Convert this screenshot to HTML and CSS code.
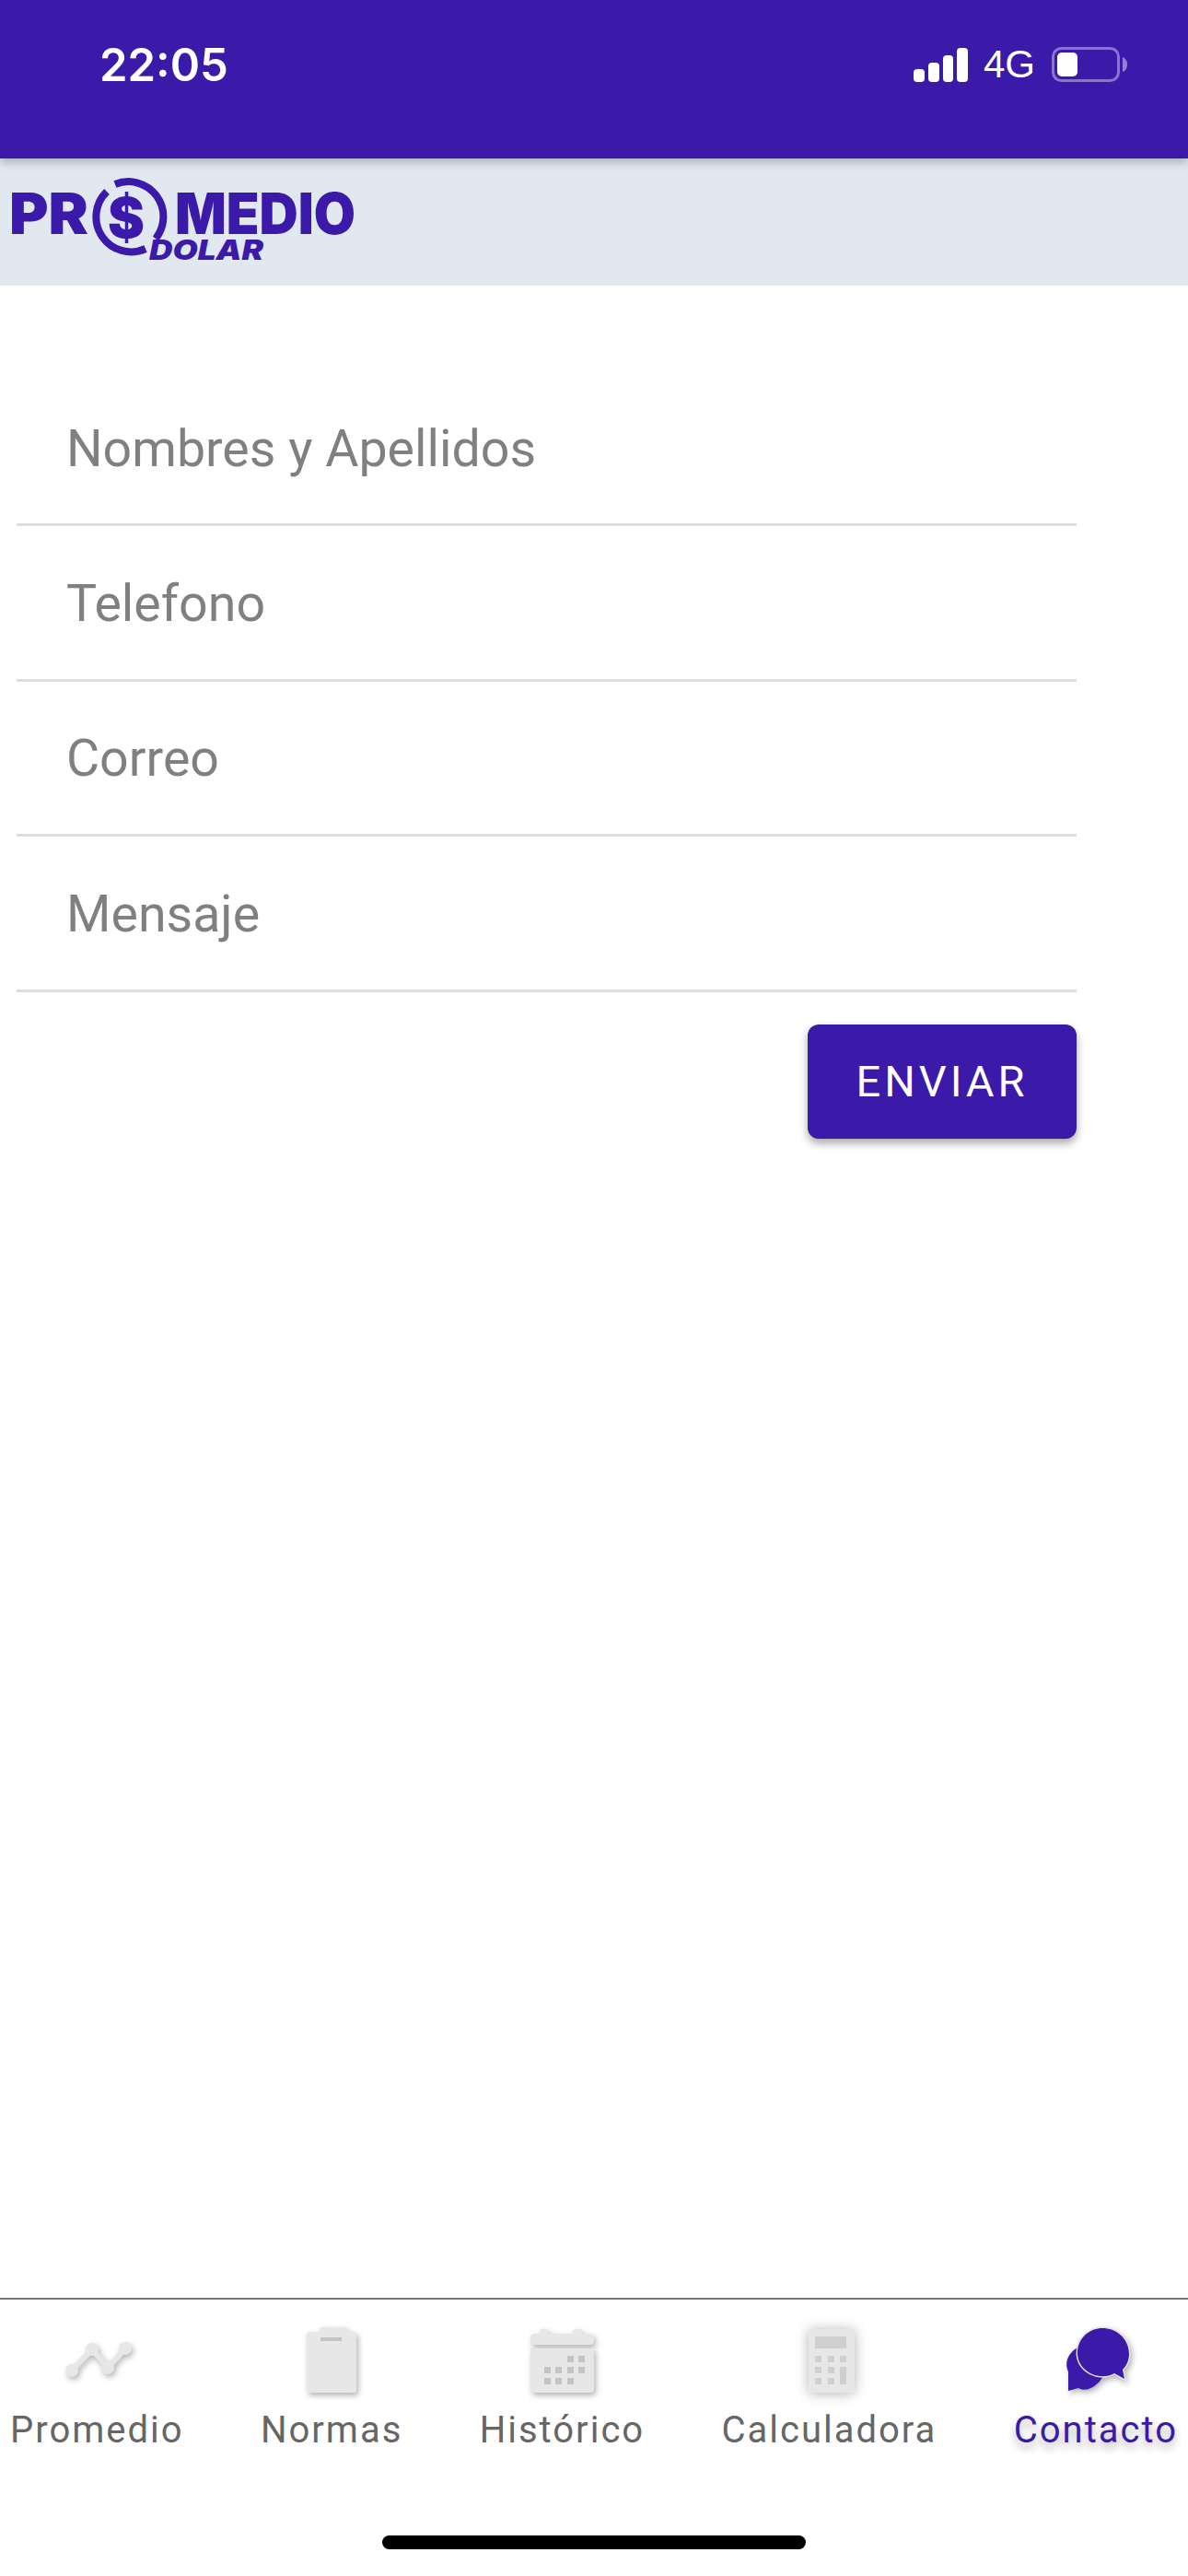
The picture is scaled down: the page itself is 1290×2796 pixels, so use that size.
FILE: index.html
```html
<!DOCTYPE html>
<html lang="es">
<head>
    <meta charset="UTF-8">
    <meta name="viewport" content="width=device-width, initial-scale=1.0">
    <title>Promedio Dolar</title>
    <link rel="stylesheet" href="styles.css">
</head>
<body>
    <div class="status-bar">
        <span class="status-time">22:05</span>
        <div class="status-right">
            <svg class="signal" width="59" height="37" viewBox="0 0 59 37">
                <rect x="0" y="23" width="12" height="14" rx="4"/>
                <rect x="16" y="16" width="12" height="21" rx="4"/>
                <rect x="32" y="8" width="11" height="29" rx="4"/>
                <rect x="47" y="0" width="12" height="37" rx="4"/>
            </svg>
            <span class="status-net">4G</span>
            <svg class="battery" width="82" height="38" viewBox="0 0 82 38">
                <rect class="battery-case" x="1.5" y="1.5" width="71" height="35" rx="9"/>
                <rect class="battery-level" x="6" y="6" width="22" height="26" rx="5"/>
                <path class="battery-cap" d="M77 11c3 1 5 4 5 8s-2 7-5 8z"/>
            </svg>
        </div>
    </div>

    <header class="app-header">
        <!-- logo: letters are real text, only the ring is drawn -->
        <svg class="logo" width="400" height="138" viewBox="0 172 400 138">
            <g class="logo-ring">
                <path d="M125 200A38 38 0 0 1 169 259"/>
                <path d="M116 208A38 38 0 0 0 158 270"/>
            </g>
            <text class="logo-main" x="10" y="254" textLength="86" lengthAdjust="spacingAndGlyphs">PR</text>
            <text class="logo-dollar" x="137" y="258" text-anchor="middle">$</text>
            <text class="logo-main" x="190" y="254" textLength="196" lengthAdjust="spacingAndGlyphs">MEDIO</text>
            <text class="logo-sub" x="162" y="282" textLength="124" lengthAdjust="spacingAndGlyphs">DOLAR</text>
        </svg>
    </header>

    <main class="contact-form">
        <div class="field"><span>Nombres y Apellidos</span></div>
        <div class="field"><span>Telefono</span></div>
        <div class="field"><span>Correo</span></div>
        <div class="field"><span>Mensaje</span></div>
        <div class="form-actions">
            <button class="btn-send" type="button">ENVIAR</button>
        </div>
    </main>

    <footer class="tab-bar">
        <nav class="tabs">
            <div class="tab">
                <svg class="tab-icon" width="80" height="72" viewBox="0 0 80 72">
                    <polyline class="trend-line" points="13,47 35,24 52,44 71,23"/>
                    <circle cx="13" cy="47" r="7"/>
                    <circle cx="35" cy="24" r="7"/>
                    <circle cx="52" cy="44" r="7"/>
                    <circle cx="71" cy="23" r="7"/>
                </svg>
                <span>Promedio</span>
            </div>
            <div class="tab">
                <svg class="tab-icon" width="80" height="72" viewBox="0 0 80 72">
                    <rect x="27" y="0" width="30" height="10" rx="3"/>
                    <rect x="13" y="5" width="54" height="66" rx="3"/>
                    <rect class="icon-detail" x="28" y="11" width="23" height="4"/>
                </svg>
                <span>Normas</span>
            </div>
            <div class="tab">
                <svg class="tab-icon" width="80" height="72" viewBox="0 0 80 72">
                    <rect x="16" y="2" width="10" height="8" rx="3"/>
                    <rect x="52" y="2" width="10" height="8" rx="3"/>
                    <rect x="6" y="7" width="69" height="12" rx="4"/>
                    <path d="M6 23h69v44a4 4 0 0 1-4 4H10a4 4 0 0 1-4-4z"/>
                    <g class="icon-detail">
                        <rect x="46" y="31" width="7" height="7"/><rect x="58" y="31" width="7" height="7"/>
                        <rect x="21" y="43" width="7" height="7"/><rect x="33" y="43" width="7" height="7"/><rect x="46" y="43" width="7" height="7"/><rect x="58" y="43" width="7" height="7"/>
                        <rect x="21" y="55" width="7" height="7"/><rect x="33" y="55" width="7" height="7"/><rect x="46" y="55" width="7" height="7"/>
                    </g>
                </svg>
                <span>Histórico</span>
            </div>
            <div class="tab">
                <svg class="tab-icon tab-icon-soft" width="80" height="72" viewBox="0 0 80 72">
                    <rect x="18" y="2" width="50" height="69" rx="4"/>
                    <g class="icon-detail calc-keys">
                        <rect x="25" y="10" width="34" height="13"/>
                        <rect x="25" y="31" width="7" height="7"/><rect x="39" y="31" width="7" height="7"/><rect x="52" y="31" width="7" height="7"/>
                        <rect x="25" y="43" width="7" height="7"/><rect x="39" y="43" width="7" height="7"/><rect x="52" y="43" width="7" height="19"/>
                        <rect x="25" y="55" width="7" height="7"/><rect x="39" y="55" width="7" height="7"/>
                    </g>
                </svg>
                <span>Calculadora</span>
            </div>
            <div class="tab tab-active">
                <svg class="tab-icon" width="80" height="72" viewBox="0 0 80 72">
                    <path d="M10 69V48C4 36 14 20 30 20 44 20 54 34 50 48 46 62 30 72 21 66z"/>
                    <path class="chat-front" d="M71 56 60 50C44 59 20 48 20 28 20 12 33 1 47 1 63 1 76 13 76 29 76 36 73 42 69 46z"/>
                </svg>
                <span>Contacto</span>
            </div>
        </nav>
        <div class="home-indicator"></div>
    </footer>
</body>
</html>
```

FILE: styles.css
```css
* {
    box-sizing: border-box;
}
body {
    font-family: Roboto, "Liberation Sans", sans-serif;
    background-color: #fff;
    margin: 0;
    height: 2796px;
    display: flex;
    flex-direction: column;
    overflow: hidden;
}

/* status bar */
.status-bar {
    position: relative;
    z-index: 2;
    height: 172px;
    flex-shrink: 0;
    padding: 0 66px 32px 108px;
    background-color: #3b1aa9;
    color: #fff;
    display: flex;
    align-items: center;
    justify-content: space-between;
    box-shadow: 0 4px 10px rgba(0, 0, 0, 0.25);
}
.status-time {
    font-family: Inter, "Liberation Sans", sans-serif;
    font-size: 49px;
    font-weight: 600;
}
.status-right {
    display: flex;
    align-items: center;
}
.status-net {
    font-family: "Liberation Sans", sans-serif;
    font-size: 42px;
    margin: 0 18px 0 17px;
}
.signal {
    fill: #fff;
}
.battery-case {
    fill: none;
    stroke: rgba(255, 255, 255, 0.4);
    stroke-width: 3;
}
.battery-level {
    fill: #fff;
}
.battery-cap {
    fill: rgba(255, 255, 255, 0.45);
}

/* app header */
.app-header {
    height: 138px;
    flex-shrink: 0;
    background-color: #e1e8f0;
}
.logo {
    display: block;
}
.logo text {
    fill: #3b1aa9;
    font-family: Inter, sans-serif;
    font-weight: 900;
}
.logo-main {
    font-size: 62px;
}
.logo-dollar {
    font-size: 60px;
}
.logo .logo-sub {
    font-size: 30px;
    font-style: italic;
}
.logo-ring {
    fill: none;
    stroke: #3b1aa9;
    stroke-width: 8;
}

/* form */
.contact-form {
    flex: 1;
    padding: 93px 0 0 18px;
    width: 1169px;
}
.field {
    height: 168.4px;
    padding: 3px 0 0 54px;
    display: flex;
    align-items: center;
    border-bottom: 3px solid #dedede;
    color: #808080;
    font-size: 55.5px;
}
.form-actions {
    display: flex;
    justify-content: flex-end;
    margin-top: 35px;
}
.btn-send {
    width: 292px;
    height: 124px;
    border: none;
    border-radius: 12px;
    background-color: #3b1aa9;
    color: #fff;
    font-family: Roboto, sans-serif;
    font-size: 47px;
    letter-spacing: 4px;
    box-shadow: 0 5px 10px rgba(0, 0, 0, 0.35);
}

/* tabs */
.tab-bar {
    flex-shrink: 0;
    height: 302px;
    border-top: 2px solid #777;
    background-color: #fff;
    display: flex;
    flex-direction: column;
}
.tabs {
    display: flex;
    justify-content: space-between;
    padding: 30px 11px 0;
}
.tab {
    display: flex;
    flex-direction: column;
    align-items: center;
    gap: 15px;
    color: #666;
    font-size: 40px;
    line-height: 50px;
    letter-spacing: 2px;
}
.tab-icon {
    fill: #e7e7e7;
    filter: drop-shadow(2px 3px 3px rgba(0, 0, 0, 0.3));
}
.tab-icon-soft {
    filter: drop-shadow(0 1px 7px rgba(0, 0, 0, 0.3));
}
.trend-line {
    fill: none;
    stroke: #e7e7e7;
    stroke-width: 6;
}
.icon-detail {
    fill: #c4c4c4;
}
.calc-keys {
    fill: #cfcfcf;
}
.tab-active {
    color: #3b1aa9;
    text-shadow: 0 6px 10px rgba(0, 0, 0, 0.3);
}
.tab-active .tab-icon {
    fill: #3b1aa9;
}
.chat-front {
    stroke: #e4e4e4;
    stroke-width: 3;
    paint-order: stroke;
}
.home-indicator {
    width: 460px;
    height: 15px;
    margin: 89px auto 0;
    border-radius: 8px;
    background-color: #000;
}
```
